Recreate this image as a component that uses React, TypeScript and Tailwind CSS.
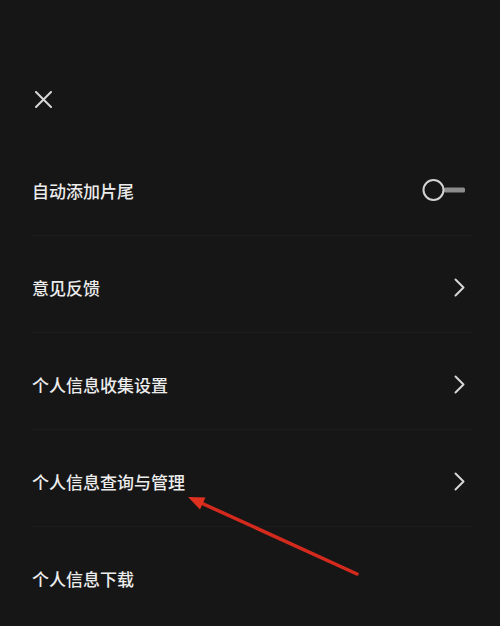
import React from "react";

const Chevron = () => (
  <svg width="11" height="19" viewBox="0 0 11 19" className="mr-[7px]">
    <polyline points="1.5,1.5 9.5,9.5 1.5,17.5" fill="none" stroke="#d6d6d6" strokeWidth="2" strokeLinecap="round" strokeLinejoin="round" />
  </svg>
);

const Toggle = () => (
  <svg width="46" height="24" viewBox="0 0 46 24" className="mr-[6px]">
    <rect x="24" y="9.5" width="21" height="5" rx="1.5" fill="#8c8c8c" />
    <circle cx="13.5" cy="12" r="10" fill="#161616" stroke="#d2d2d2" strokeWidth="2" />
  </svg>
);

const Row = ({ label, right, last }: { label: string; right: React.ReactNode; last?: boolean }) => (
  <div className={`h-[97px] flex items-center justify-between pt-[6px] ${last ? "" : "border-b border-[#1c1c1c]"}`}>
    <span className="text-[17px] font-medium text-[#ececec] leading-none">{label}</span>
    {right}
  </div>
);

export default function App() {
  return (
    <div
      className="relative w-[500px] h-[626px] bg-[#161616] overflow-hidden"
      style={{ fontFamily: '"Noto Sans CJK SC", "Noto Sans", sans-serif' }}
    >
      <div className="h-[139px] pt-[91px] pl-[35px]">
        <svg width="17" height="17" viewBox="0 0 17 17">
          <line x1="1" y1="1" x2="16" y2="16" stroke="#d8d8d8" strokeWidth="2" strokeLinecap="round" />
          <line x1="16" y1="1" x2="1" y2="16" stroke="#d8d8d8" strokeWidth="2" strokeLinecap="round" />
        </svg>
      </div>
      <div className="ml-[32px] mr-[28px]">
        <Row label="自动添加片尾" right={<Toggle />} />
        <Row label="意见反馈" right={<Chevron />} />
        <Row label="个人信息收集设置" right={<Chevron />} />
        <Row label="个人信息查询与管理" right={<Chevron />} />
        <Row label="个人信息下载" right={null} last />
      </div>
      <svg className="absolute left-0 top-0 pointer-events-none" width="500" height="626" viewBox="0 0 500 626">
        <line x1="357" y1="574" x2="198" y2="501.5" stroke="#d42a1e" strokeWidth="3.5" strokeLinecap="round" />
        <polygon points="188,497 200,509.5 205.5,497.5" fill="#e0301f" />
      </svg>
    </div>
  );
}
